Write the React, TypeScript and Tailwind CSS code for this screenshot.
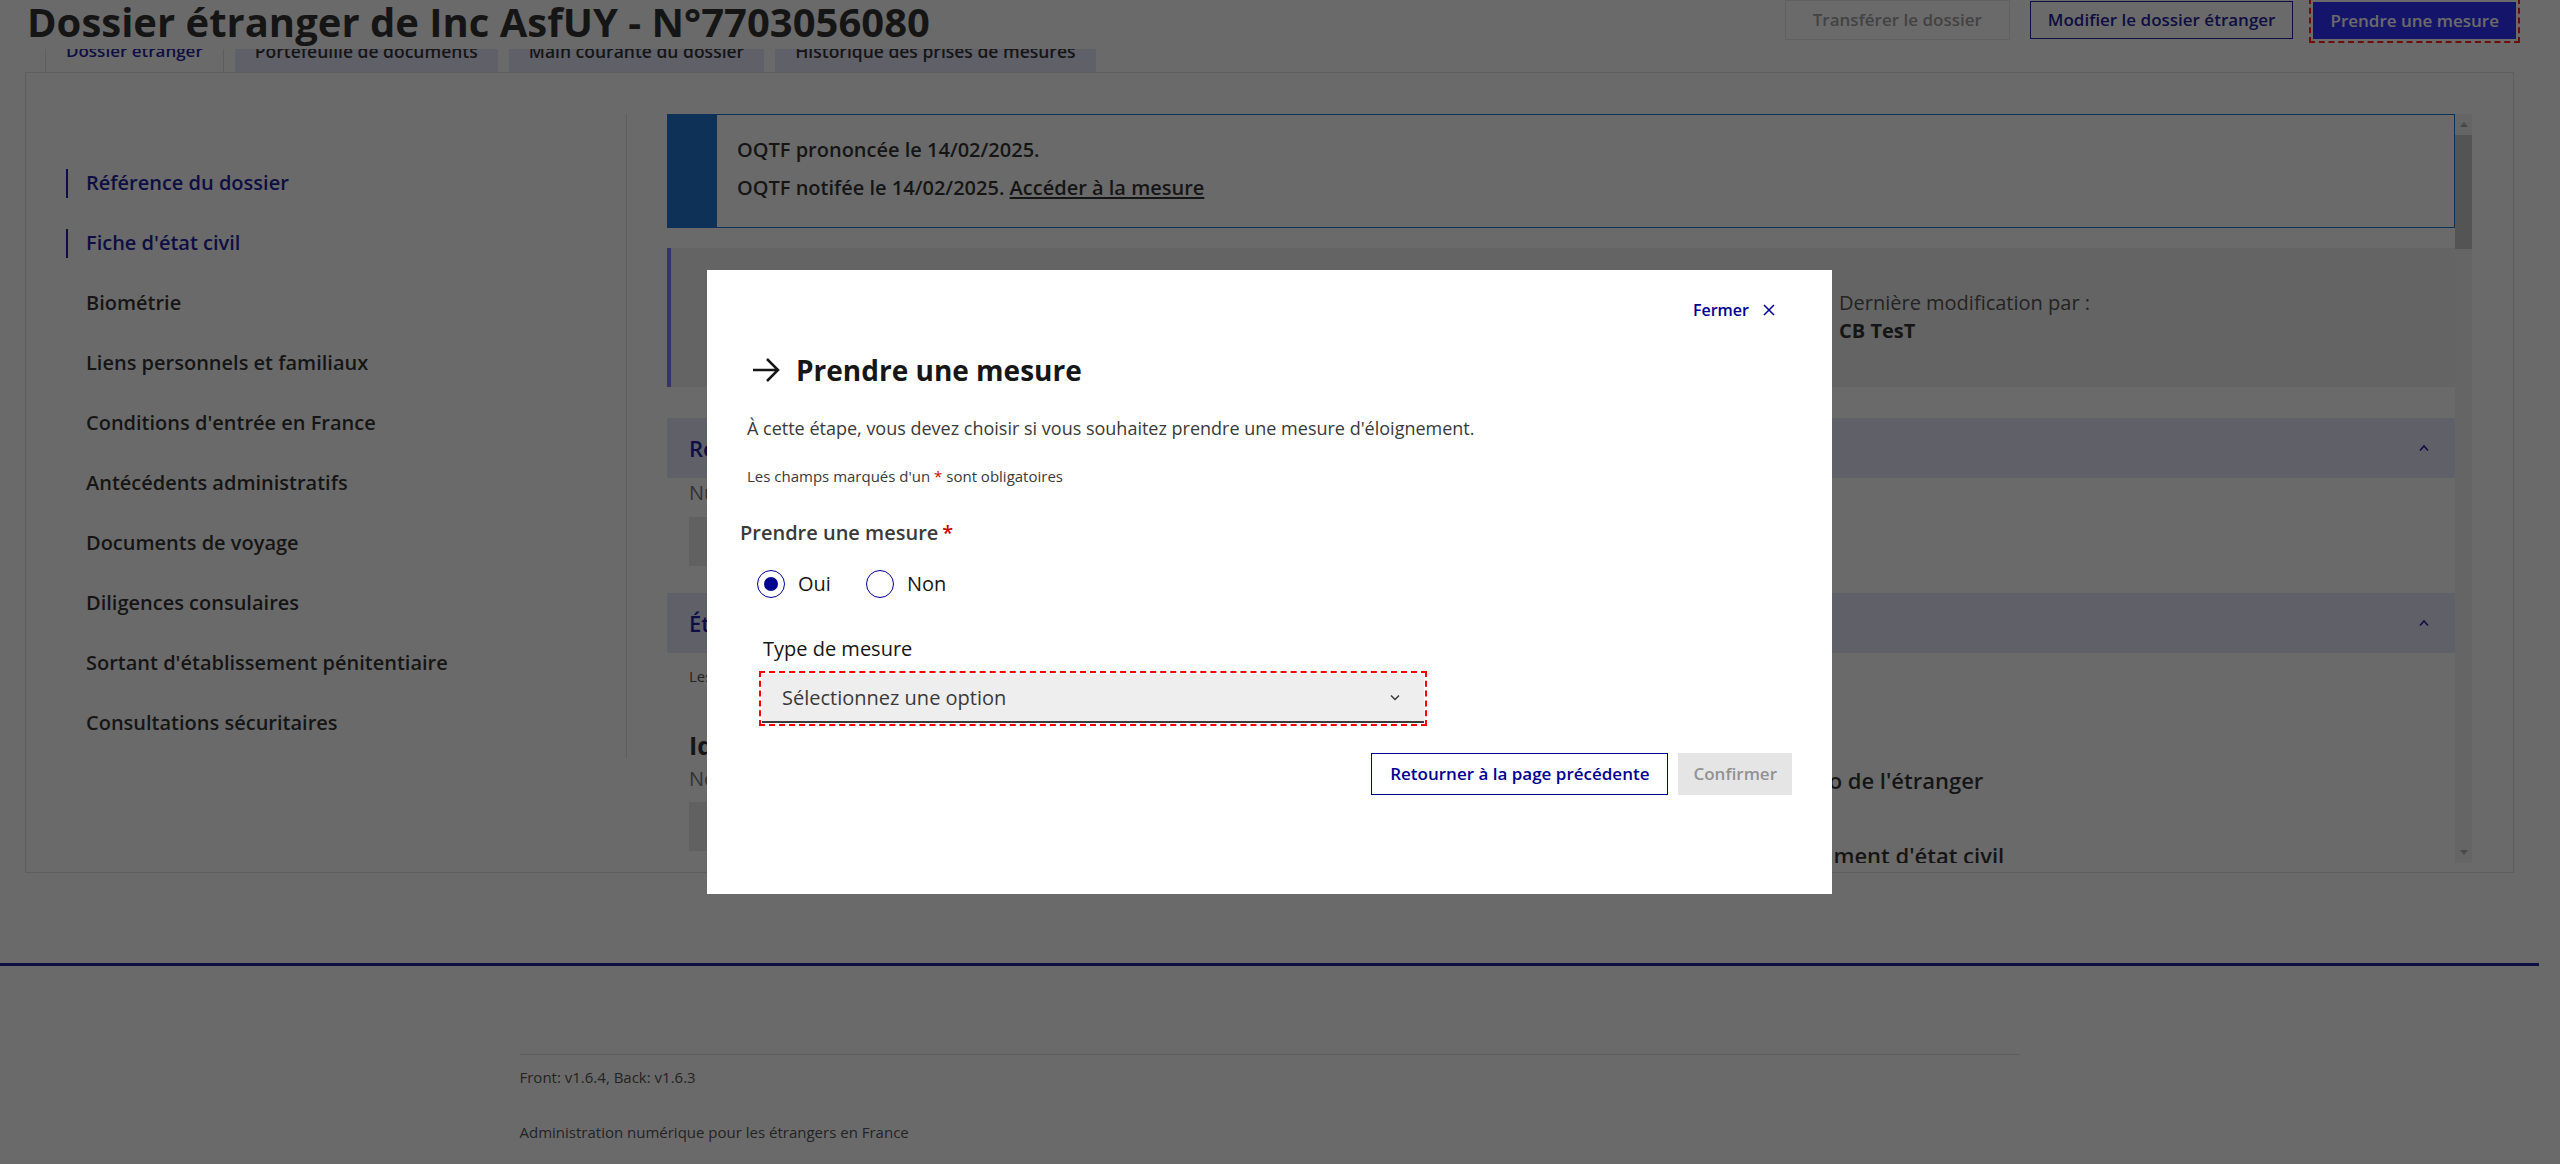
import React from "react";

const navItems = [
  { label: "Référence du dossier", active: true },
  { label: "Fiche d'état civil", active: true },
  { label: "Biométrie" },
  { label: "Liens personnels et familiaux" },
  { label: "Conditions d'entrée en France" },
  { label: "Antécédents administratifs" },
  { label: "Documents de voyage" },
  { label: "Diligences consulaires" },
  { label: "Sortant d'établissement pénitentiaire" },
  { label: "Consultations sécuritaires" },
];

const tabs = [
  "Dossier étranger",
  "Portefeuille de documents",
  "Main courante du dossier",
  "Historique des prises de mesures",
];

function ChevronUp() {
  return (
    <svg width="12" height="8" viewBox="0 0 12 8" fill="none" className="text-[#000091]">
      <path d="M2 6.5 L6 2 L10 6.5" stroke="currentColor" strokeWidth="1.6" />
    </svg>
  );
}

function Radio({ label, checked }: { label: string; checked?: boolean }) {
  return (
    <label className="flex items-center gap-[13px]">
      <span className="flex h-[28px] w-[28px] items-center justify-center rounded-full border border-[#000091]">
        {checked && <span className="h-[14px] w-[14px] rounded-full bg-[#000091]" />}
      </span>
      <span className="text-[20px] leading-[28px] text-[#161616]">{label}</span>
    </label>
  );
}

function Accordion({ title, children }: { title: string; children: React.ReactNode }) {
  return (
    <section>
      <div className="flex h-[60px] items-center justify-between bg-[#e3e3fd] pl-[22px] pr-[25px]">
        <span className="text-[22px] font-semibold text-[#000091]">{title}</span>
        <ChevronUp />
      </div>
      {children}
    </section>
  );
}

export default function App() {
  return (
    <div className="relative h-[1164px] overflow-hidden bg-white font-['Open_Sans',sans-serif] text-[#161616]">
      <div className="w-[2539px]">
        {/* header */}
        <header className="relative z-10 flex h-[49px] items-start justify-between bg-white pl-[27px] pr-[23px]">
          <h1 className="text-[40px] font-bold leading-[44px] text-[#161616]">
            Dossier étranger de Inc AsfUY - N°7703056080
          </h1>
          <div className="flex items-start gap-[20px]">
            <button className="h-[40px] border border-[#e5e5e5] px-[27px] text-[17px] font-semibold text-[#929292]">
              Transférer le dossier
            </button>
            <button className="mt-[1px] h-[38px] border border-[#000091] px-[17px] text-[17px] font-semibold text-[#000091]">
              Modifier le dossier étranger
            </button>
            <button className="mt-[2px] h-[37px] bg-[#1212ff] px-[17px] text-[17px] font-semibold text-white outline-2 outline-offset-2 outline-dashed outline-[#ff0000]">
              Prendre une mesure
            </button>
          </div>
        </header>

        {/* tabs */}
        <div className="ml-[45px] flex h-[23px] items-end gap-[11px] overflow-hidden">
          {tabs.map((t, i) => (
            <div
              key={t}
              className={
                i === 0
                  ? "border-x border-[#dddddd] bg-white px-[20px] pb-[9px] text-[17px] font-semibold leading-[24px] text-[#000091]"
                  : "bg-[#e3e3fd] px-[20px] pb-[9px] text-[17.5px] font-semibold leading-[24px] text-[#161616]"
              }
            >
              {t}
            </div>
          ))}
        </div>

        {/* main box */}
        <div className="mx-[25px] flex h-[801px] border border-[#dddddd]">
          <nav className="mt-[41px] h-[644px] w-[601px] shrink-0 border-r border-[#dddddd] pl-[40px] pt-[39px]">
            {navItems.map((n) => (
              <div key={n.label} className="flex h-[60px] items-center">
                <span className={n.active ? "h-[29px] w-[2px] bg-[#000091]" : "h-[29px] w-[2px]"} />
                <span
                  className={
                    n.active
                      ? "ml-[18px] text-[20px] font-semibold text-[#000091]"
                      : "ml-[18px] text-[20px] font-semibold text-[#161616]"
                  }
                >
                  {n.label}
                </span>
              </div>
            ))}
          </nav>

          <div className="ml-[40px] mr-[41px] mt-[41px] flex h-[749px] flex-1 overflow-hidden">
            <div className="flex-1 overflow-hidden">
              {/* alert */}
              <div className="flex h-[114px] border border-[#0063cb]">
                <div className="w-[49px] bg-[#0063cb]" />
                <div className="pl-[20px] pt-[21px] text-[20px] font-semibold leading-[28px] text-[#161616]">
                  <p>OQTF prononcée le 14/02/2025.</p>
                  <p className="mt-[10px]">
                    OQTF notifée le 14/02/2025. <span className="underline underline-offset-2">Accéder à la mesure</span>
                  </p>
                </div>
              </div>

              {/* callout */}
              <div className="mt-[20px] grid h-[139px] grid-cols-[1168px_1fr] border-l-4 border-[#6a6af4] bg-[#eeeeee] pt-[41px] text-[20px] leading-[28px] text-[#3a3a3a]">
                <div />
                <div>
                  <p>Dernière modification par :</p>
                  <p className="font-bold text-[#161616]">CB TesT</p>
                </div>
              </div>

              <div className="mt-[31px]">
                <Accordion title="Référence du dossier">
                  <div className="px-[22px] pb-[27px] pt-[3px]">
                    <p className="text-[20px] leading-[24px] text-[#666666]">Numéro de dossier</p>
                    <div className="mt-[12px] h-[49px] w-[700px] bg-[#e5e5e5]" />
                  </div>
                </Accordion>
                <Accordion title="État civil">
                  <div className="px-[22px] pt-[13px]">
                    <p className="text-[15px] leading-[20px] text-[#3a3a3a]">
                      Les champs marqués d'un <span className="text-[#ce0500]">*</span> sont obligatoires
                    </p>
                    <div className="mt-[43px] grid grid-cols-[1090px_1fr]">
                      <div>
                        <h3 className="text-[25px] font-bold leading-[32px] text-[#161616]">Identité</h3>
                        <p className="mt-[6px] text-[20px] leading-[24px] text-[#666666]">Nom</p>
                        <div className="mt-[11px] h-[49px] w-[700px] bg-[#e5e5e5]" />
                      </div>
                      <div className="pt-[36px]">
                        <h3 className="text-[22px] font-semibold leading-[30px] text-[#161616]">Photo de l'étranger</h3>
                        <h3 className="mt-[45px] text-[22px] font-semibold leading-[30px] text-[#161616]">
                          Document d'état civil
                        </h3>
                      </div>
                    </div>
                  </div>
                </Accordion>
              </div>
            </div>

            {/* scrollbar */}
            <div className="flex w-[17px] flex-col items-center bg-[#f1f1f1]">
              <div className="flex h-[21px] items-center">
                <div className="h-0 w-0 border-x-[4px] border-b-[5px] border-x-transparent border-b-[#a3a3a3]" />
              </div>
              <div className="h-[114px] w-[17px] bg-[#c1c1c1]" />
              <div className="flex-1" />
              <div className="flex h-[21px] items-center">
                <div className="h-0 w-0 border-x-[4px] border-t-[5px] border-x-transparent border-t-[#a3a3a3]" />
              </div>
            </div>
          </div>
        </div>

        {/* footer */}
        <footer className="mt-[90px] border-t-[3px] border-[#000091]">
          <div className="mx-auto w-[1500px] pt-[88px]">
            <div className="border-t border-[#dddddd] pt-[12px] text-[15px] leading-[20px] text-[#3a3a3a]">
              <p>Front: v1.6.4, Back: v1.6.3</p>
              <p className="mt-[35px]">Administration numérique pour les étrangers en France</p>
            </div>
          </div>
        </footer>
      </div>

      {/* overlay */}
      <div className="fixed inset-0 z-40 bg-[rgba(22,22,22,0.64)]" />

      {/* modal */}
      <div className="fixed left-[707px] top-[270px] z-50 flex h-[624px] w-[1125px] flex-col bg-white px-[40px] pt-[28px]">
        <div className="flex h-[24px] items-center justify-end pr-[17px] text-[#000091]">
          <span className="text-[16px] font-semibold">Fermer</span>
          <svg width="12" height="12" viewBox="0 0 12 12" className="ml-[14px]">
            <path d="M1 1 L11 11 M11 1 L1 11" stroke="currentColor" strokeWidth="1.5" />
          </svg>
        </div>

        <h2 className="mt-[28px] flex h-[40px] items-center gap-[16px] text-[28px] font-bold text-[#161616]">
          <svg width="28" height="28" viewBox="0 0 28 28" fill="none" className="ml-[5px]">
            <path d="M1 14 H26 M15 3 L26 14 L15 25" stroke="currentColor" strokeWidth="2.5" />
          </svg>
          Prendre une mesure
        </h2>

        <p className="mt-[24px] text-[18px] leading-[28px] text-[#3a3a3a]">
          À cette étape, vous devez choisir si vous souhaitez prendre une mesure d'éloignement.
        </p>
        <p className="mt-[22px] text-[15px] leading-[24px] text-[#3a3a3a]">
          Les champs marqués d'un <span className="text-[#ce0500]">*</span> sont obligatoires
        </p>

        <div role="radiogroup">
          <p className="-ml-[7px] mt-[31px] text-[20px] font-semibold leading-[28px] text-[#3a3a3a]">
            Prendre une mesure<span className="ml-[4px] text-[#ce0500]">*</span>
          </p>
          <div className="ml-[10px] mt-[23px] flex items-center gap-[35px]">
            <Radio label="Oui" checked />
            <Radio label="Non" />
          </div>
        </div>

        <p className="ml-[16px] mt-[37px] text-[20px] leading-[28px] text-[#161616]">Type de mesure</p>
        <div className="ml-[15px] mt-[11px] flex h-[49px] w-[662px] items-center justify-between border-b-2 border-[#3a3a3a] bg-[#eeeeee] pl-[20px] pr-[24px] outline-2 outline-offset-1 outline-dashed outline-[#ff0000]">
          <span className="text-[20px] text-[#3a3a3a]">Sélectionnez une option</span>
          <svg width="10" height="7" viewBox="0 0 10 7" fill="none">
            <path d="M1 1.5 L5 5.5 L9 1.5" stroke="#3a3a3a" strokeWidth="1.5" />
          </svg>
        </div>

        <div className="mt-[30px] flex justify-end gap-[10px]">
          <button className="h-[42px] border border-[#000091] px-[18px] text-[17px] font-semibold text-[#000091]">
            Retourner à la page précédente
          </button>
          <button className="h-[42px] bg-[#e5e5e5] px-[15px] text-[17px] font-semibold text-[#929292]">
            Confirmer
          </button>
        </div>
      </div>
    </div>
  );
}
